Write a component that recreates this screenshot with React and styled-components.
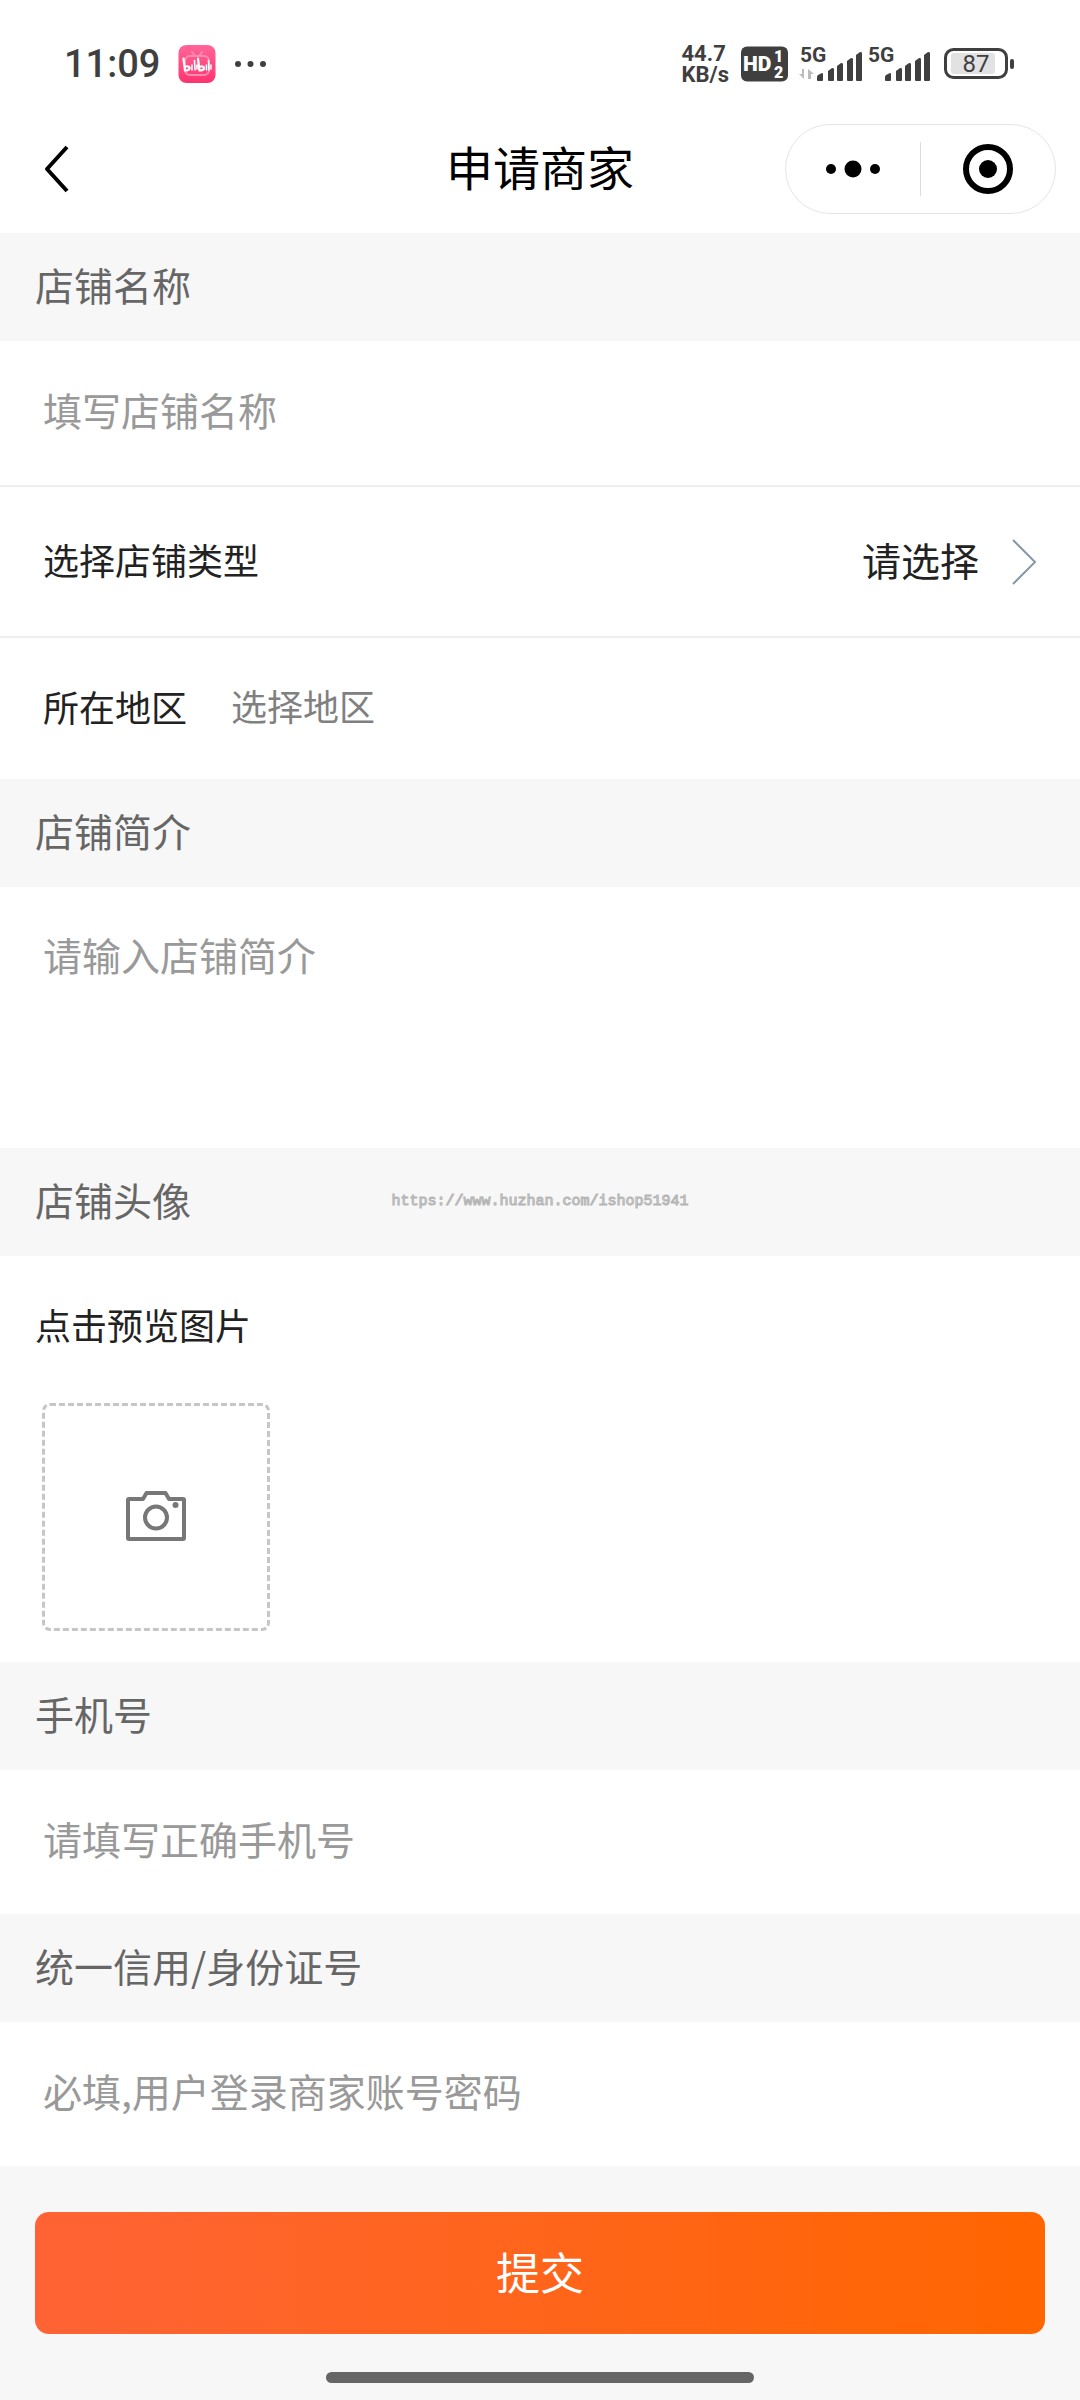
import React, { useState } from 'react';
import styled, { createGlobalStyle } from 'styled-components';

const GlobalStyle = createGlobalStyle`
  * {
    box-sizing: border-box;
  }
  body {
    margin: 0;
    background: #f7f7f7;
    color: #222;
    font-family: 'Noto Sans CJK SC', sans-serif;
  }
  button, input, textarea, select {
    margin: 0;
    padding: 0;
    border: 0;
    background: none;
    color: inherit;
    font-family: inherit;
    outline: none;
  }
  svg {
    display: block;
    flex: none;
    overflow: visible;
  }
`;

const Page = styled.div`
  display: flex;
  flex-direction: column;
  min-height: 100vh;
`;
const StatusBar = styled.div`
  display: flex;
  justify-content: space-between;
  align-items: center;
  height: 104px;
  padding: 24px 64px 0;
  background: #fff;
  color: #3f3f3f;
  font-family: Roboto, sans-serif;
`;
const StatusGroup = styled.div`
  display: flex;
  align-items: center;
  gap: ${props => props.$gap}px;
`;
const Time = styled.span`
  font-size: 38px;
  line-height: 40px;
  font-weight: 500;
`;
const Speed = styled.span`
  font-size: 22px;
  line-height: 21px;
  font-weight: 700;
`;
const NavBar = styled.header`
  display: grid;
  grid-template-columns: 1fr auto 1fr;
  align-items: center;
  height: 129px;
  padding: 0 24px;
  background: #fff;
  color: #000;
`;
const BackButton = styled.button`
  justify-self: start;
  padding: 10px 20px;
`;
const Title = styled.h1`
  margin: 0;
  padding-bottom: 6px;
  font-size: 47px;
  line-height: 64px;
  font-weight: 400;
`;
const Capsule = styled.div`
  justify-self: end;
  display: flex;
  align-items: center;
  width: 271px;
  height: 90px;
  border: 1px solid #e5e5e5;
  border-radius: 45px;
`;
const CapsuleButton = styled.button`
  flex: 1;
  display: flex;
  justify-content: center;
`;
const Divider = styled.span`
  width: 1px;
  height: 54px;
  background: #ddd;
`;
const SectionTitle = styled.div`
  display: grid;
  grid-template-columns: 1fr auto 1fr;
  align-items: center;
  height: 108px;
  padding: 0 35px;
  color: #666;
  font-size: 39px;
  line-height: 56px;
`;
const SectionLabel = styled.label`
  padding-bottom: 6px;
`;
const Watermark = styled.span`
  color: #e8e8e8;
  font-family: 'Liberation Mono', monospace;
  font-size: 15px;
  line-height: 20px;
  -webkit-text-stroke: 1px #b4b4b4;
`;
const Row = styled.div`
  display: flex;
  align-items: center;
  height: ${props => props.$height || 144}px;
  padding: 0 44px 0 43px;
  border-bottom: ${props => (props.$line ? '2px solid #eee' : '0')};
  background: #fff;
  font-size: 36px;
  line-height: 52px;
`;
const RowLabel = styled.label`
  margin-right: 44px;
  padding-bottom: 6px;
`;
const TextInput = styled.input`
  flex: 1;
  min-width: 0;
  height: 64px;
  padding-bottom: 8px;
  font-size: ${props => props.$size || 39}px;
  &::placeholder {
    color: ${props => props.$hint || '#999'};
    opacity: 1;
  }
`;
const TypeSelect = styled.select`
  appearance: none;
  margin: 0 32px 0 auto;
  padding-bottom: 6px;
  font-size: 39px;
  line-height: 56px;
`;
const IntroPanel = styled.div`
  padding: 39px 43px 43px;
  background: #fff;
`;
const IntroInput = styled.textarea`
  display: block;
  width: 100%;
  height: 179px;
  resize: none;
  font-size: 39px;
  line-height: 56px;
  &::placeholder {
    color: #999;
    opacity: 1;
  }
`;
const AvatarPanel = styled.div`
  padding: 42px 35px 31px;
  background: #fff;
  font-size: 36px;
  line-height: 52px;
`;
const UploadButton = styled.button`
  display: flex;
  justify-content: center;
  align-items: center;
  width: 228px;
  height: 228px;
  margin: 53px 7px 0;
  padding-bottom: 3px;
  border: 3px dashed #c6c6c6;
  border-radius: 8px;
`;
const Footer = styled.footer`
  display: flex;
  flex-direction: column;
  align-items: center;
  gap: 38px;
  padding: 46px 35px 17px;
`;
const SubmitButton = styled.button`
  width: 100%;
  height: 122px;
  padding-bottom: 4px;
  border-radius: 14px;
  background: linear-gradient(90deg, #ff6335, #ff6600);
  color: #fff;
  font-size: 44px;
  line-height: 64px;
`;
const HomeBar = styled.div`
  width: 428px;
  max-width: 100%;
  height: 11px;
  border-radius: 6px;
  background: #666;
`;

const BiliIcon = () => (
  <svg width="38" height="38" viewBox="0 0 38 38" fill="none">
    <defs>
      <linearGradient id="pink" x1="0" y1="0" x2="0" y2="1">
        <stop offset="0" stopColor="#ff6699" />
        <stop offset="1" stopColor="#ff3370" />
      </linearGradient>
    </defs>
    <rect x="0.5" y="0" width="37" height="38" rx="8" fill="url(#pink)" />
    <g stroke="#ff8cb0" strokeWidth="2" strokeLinecap="round">
      <rect x="7" y="11" width="24" height="19" rx="5" />
      <path d="M14 7l3 4M24 7l-3 4" />
    </g>
    <g stroke="#fff" strokeWidth="2.2" strokeLinecap="round" strokeLinejoin="round">
      <path d="M5.500 13.500l1.500 12c6 0 6-5 1-4M20 13.500l1.500 12c6 0 6-5 1-4" />
      <path d="M14 20v5M16.500 15.500l.5 9.500M19 20v4M28.500 20v5M30.500 15.500l.5 9.500M33 20v4" strokeWidth="1.600" />
    </g>
  </svg>
);

const MoreDots = () => (
  <svg width="34" height="8" viewBox="0 0 34 8" fill="#3f3f3f">
    <circle cx="4" cy="4" r="3" />
    <circle cx="16.500" cy="4" r="3" />
    <circle cx="29" cy="4" r="3" />
  </svg>
);

const HdBadge = () => (
  <svg width="47" height="36" viewBox="0 0 47 36" fill="#fff" fontFamily="Roboto, sans-serif" fontWeight="900">
    <rect y="0.500" width="47" height="35" rx="6" fill="#3f3f3f" />
    <text x="2" y="25" fontSize="21">HD</text>
    <text x="33" y="16" fontSize="16">1</text>
    <text x="33" y="32" fontSize="16">2</text>
  </svg>
);

const Signal = ({ data }) => (
  <svg width="64" height="36" viewBox="0 0 64 36" fill="#3f3f3f">
    <text x="0" y="16" fontSize="21" fontFamily="Roboto, sans-serif" fontWeight="700">5G</text>
    {data && (
      <path d="M4 23v10l-5-5h3v-5zM8 33V23l6 5h-3v5z" fill="#bbb" />
    )}
    <path d="M17 34v-3q0-1 1-2l4-2q1 0 1 1v6q0 1-1 1h-4q-1 0-1-1z" />
    <path d="M28 34v-9l4-3q2 0 2 1v11q0 1-1 1h-4q-1 0-1-1z" />
    <path d="M37 34V20l4-3q2 0 2 1v16q0 1-1 1h-4q-1 0-1-1z" />
    <path d="M47 34V15l4-3q2 0 2 1v21q0 1-1 1h-4q-1 0-1-1z" />
    <path d="M56 34V9l4-3q2 0 2 1v27q0 1-1 1h-4q-1 0-1-1z" />
  </svg>
);

const Battery = () => (
  <svg width="72" height="32" viewBox="0 0 72 32" fill="#3f3f3f">
    <rect x="1.500" y="1.500" width="61" height="28" rx="8" fill="none" stroke="#3f3f3f" strokeWidth="3" />
    <rect x="7" y="5" width="44" height="21" rx="3" fill="#e2e2e2" />
    <rect x="66" y="11" width="4" height="10" rx="2" />
    <text x="32" y="24" fontSize="24" textAnchor="middle" fontFamily="Roboto, sans-serif" fontWeight="400">87</text>
  </svg>
);

const CameraIcon = () => (
  <svg width="62" height="52" viewBox="0 0 62 52" fill="none" stroke="#777" strokeWidth="4" strokeLinejoin="round">
    <path d="M4 9h14l3.500-6h19l3.500 6h14q1 0 1 1v38q0 1-1 1H4q-1 0-1-1V10q0-1 1-1z" />
    <circle cx="31" cy="27.500" r="11" />
    <circle cx="50.500" cy="15" r="3" fill="#777" stroke="none" />
  </svg>
);

const App = () => {
  const [type, setType] = useState('');

  return (
    <Page>
      <GlobalStyle />
      <StatusBar>
        <StatusGroup $gap={18}>
          <Time>11:09</Time>
          <BiliIcon />
          <MoreDots />
        </StatusGroup>
        <StatusGroup $gap={12}>
          <Speed>44.7<br />KB/s</Speed>
          <HdBadge />
          <StatusGroup $gap={4}>
            <Signal data />
            <Signal />
          </StatusGroup>
          <Battery />
        </StatusGroup>
      </StatusBar>
      <NavBar>
        <BackButton type="button" aria-label="返回">
          <svg width="26" height="48" viewBox="0 0 26 48" fill="none" stroke="#000" strokeWidth="4" strokeLinejoin="round">
            <path d="M23 2L3 24l20 22" />
          </svg>
        </BackButton>
        <Title>申请商家</Title>
        <Capsule>
          <CapsuleButton type="button" aria-label="更多">
            <svg width="54" height="18" viewBox="0 0 54 18">
              <circle cx="5" cy="9" r="5" />
              <circle cx="27" cy="9" r="8.500" />
              <circle cx="49" cy="9" r="5" />
            </svg>
          </CapsuleButton>
          <Divider />
          <CapsuleButton type="button" aria-label="关闭">
            <svg width="50" height="50" viewBox="0 0 50 50">
              <circle cx="25" cy="25" r="22" fill="none" stroke="#000" strokeWidth="6" />
              <circle cx="25" cy="25" r="9" />
            </svg>
          </CapsuleButton>
        </Capsule>
      </NavBar>

      <SectionTitle>
        <SectionLabel htmlFor="name">店铺名称</SectionLabel>
      </SectionTitle>
      <Row $line $height={146}>
        <TextInput id="name" placeholder="填写店铺名称" />
      </Row>
      <Row $line $height={151}>
        <RowLabel htmlFor="type">选择店铺类型</RowLabel>
        <TypeSelect id="type" value={type} onChange={e => setType(e.target.value)}>
          <option value="">请选择</option>
        </TypeSelect>
        <svg width="24" height="46" viewBox="0 0 24 46" fill="none" stroke="#8799a3" strokeWidth="2">
          <path d="M1 1l22 22L1 45" />
        </svg>
      </Row>
      <Row $height={141}>
        <RowLabel htmlFor="region">所在地区</RowLabel>
        <TextInput id="region" placeholder="选择地区" $size={36} $hint="#808080" />
      </Row>

      <SectionTitle>
        <SectionLabel htmlFor="intro">店铺简介</SectionLabel>
      </SectionTitle>
      <IntroPanel>
        <IntroInput id="intro" placeholder="请输入店铺简介" />
      </IntroPanel>

      <SectionTitle>
        <SectionLabel htmlFor="avatar">店铺头像</SectionLabel>
        <Watermark>https://www.huzhan.com/ishop51941</Watermark>
      </SectionTitle>
      <AvatarPanel>
        <div>点击预览图片</div>
        <UploadButton id="avatar" type="button" aria-label="上传图片">
          <CameraIcon />
        </UploadButton>
      </AvatarPanel>

      <SectionTitle>
        <SectionLabel htmlFor="phone">手机号</SectionLabel>
      </SectionTitle>
      <Row>
        <TextInput id="phone" type="tel" placeholder="请填写正确手机号" />
      </Row>

      <SectionTitle>
        <SectionLabel htmlFor="license">统一信用/身份证号</SectionLabel>
      </SectionTitle>
      <Row>
        <TextInput id="license" placeholder="必填,用户登录商家账号密码" />
      </Row>

      <Footer>
        <SubmitButton type="button">提交</SubmitButton>
        <HomeBar />
      </Footer>
    </Page>
  );
};

export default App;
